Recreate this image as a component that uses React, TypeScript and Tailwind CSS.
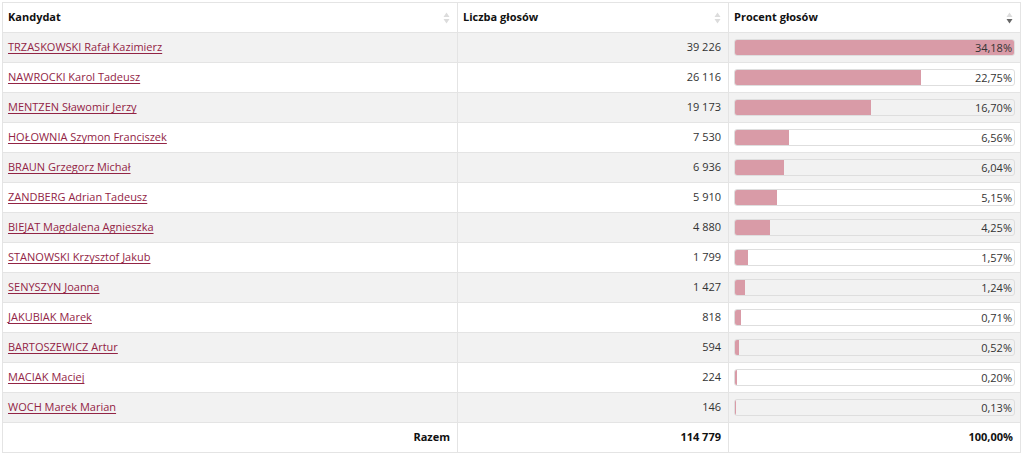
import React from "react";

type Row = { name: string; votes: string; pct: number };

const rows: Row[] = [
  { name: "TRZASKOWSKI Rafał Kazimierz", votes: "39 226", pct: 34.18 },
  { name: "NAWROCKI Karol Tadeusz", votes: "26 116", pct: 22.75 },
  { name: "MENTZEN Sławomir Jerzy", votes: "19 173", pct: 16.7 },
  { name: "HOŁOWNIA Szymon Franciszek", votes: "7 530", pct: 6.56 },
  { name: "BRAUN Grzegorz Michał", votes: "6 936", pct: 6.04 },
  { name: "ZANDBERG Adrian Tadeusz", votes: "5 910", pct: 5.15 },
  { name: "BIEJAT Magdalena Agnieszka", votes: "4 880", pct: 4.25 },
  { name: "STANOWSKI Krzysztof Jakub", votes: "1 799", pct: 1.57 },
  { name: "SENYSZYN Joanna", votes: "1 427", pct: 1.24 },
  { name: "JAKUBIAK Marek", votes: "818", pct: 0.71 },
  { name: "BARTOSZEWICZ Artur", votes: "594", pct: 0.52 },
  { name: "MACIAK Maciej", votes: "224", pct: 0.2 },
  { name: "WOCH Marek Marian", votes: "146", pct: 0.13 },
];

const maxPct = 34.18;

const fmt = (n: number) => n.toFixed(2).replace(".", ",") + "%";

// small up/down sort arrows, the active one darker
const SortIcon = ({ active }: { active?: boolean }) => (
  <svg width="7" height="12" viewBox="0 0 7 12" className="shrink-0">
    <path d="M3.5 0.5 L6.5 5 L0.5 5 Z" fill="#dcdcdc" />
    <path d="M3.5 11.5 L6.5 7 L0.5 7 Z" fill={active ? "#666666" : "#dcdcdc"} />
  </svg>
);

export default function App() {
  return (
    <div
      className="w-[1024px] h-[453px] bg-white pt-[2px] pl-[2px] text-[11px] text-[#333333]"
      style={{ fontFamily: '"Open Sans", "Liberation Sans", sans-serif' }}
    >
      <table className="w-[1018px] border-collapse border border-[#e4e4e4] table-fixed">
        <colgroup>
          <col className="w-[455px]" />
          <col className="w-[271px]" />
          <col className="w-[292px]" />
        </colgroup>
        <thead>
          <tr className="h-[30px]">
            <th className="pl-[5px] pr-[7px] text-left font-bold text-[#111111] border-r border-[#e4e4e4]">
              <div className="flex items-center justify-between">
                <span>Kandydat</span>
                <SortIcon />
              </div>
            </th>
            <th className="pl-[5px] pr-[7px] text-left font-bold text-[#111111] border-r border-[#e4e4e4]">
              <div className="flex items-center justify-between">
                <span>Liczba głosów</span>
                <SortIcon />
              </div>
            </th>
            <th className="pl-[5px] pr-[7px] text-left font-bold text-[#111111]">
              <div className="flex items-center justify-between">
                <span>Procent głosów</span>
                <SortIcon active />
              </div>
            </th>
          </tr>
        </thead>
        <tbody>
          {rows.map((r, i) => (
            <tr
              key={r.name}
              className={
                "h-[30px] border-t border-[#e4e4e4] " +
                (i % 2 === 0 ? "bg-[#f2f2f2]" : "bg-white")
              }
            >
              <td className="pl-[5px] pr-[7px] border-r border-[#e4e4e4]">
                <a href="#" className="text-[#922445] underline underline-offset-2">
                  {r.name}
                </a>
              </td>
              <td className="pl-[5px] pr-[7px] text-right border-r border-[#e4e4e4]">
                {r.votes}
              </td>
              <td className="pl-[5px] pr-[5px]">
                <div className="relative h-[17px] rounded-[3px] border border-[#dedede] overflow-hidden">
                  <div
                    className="absolute left-0 top-0 bottom-0 bg-[#d99ba7]"
                    style={{ width: `${(r.pct / maxPct) * 100}%` }}
                  />
                  <div className="relative pr-[2px] text-right leading-[15px]">
                    {fmt(r.pct)}
                  </div>
                </div>
              </td>
            </tr>
          ))}
          <tr className="h-[30px] border-t border-[#e4e4e4]">
            <td className="pl-[5px] pr-[7px] text-right font-bold text-[#111111] border-r border-[#e4e4e4]">
              Razem
            </td>
            <td className="pl-[5px] pr-[7px] text-right font-bold text-[#111111] border-r border-[#e4e4e4]">
              114 779
            </td>
            <td className="pl-[5px] pr-[7px] text-right font-bold text-[#111111]">100,00%</td>
          </tr>
        </tbody>
      </table>
    </div>
  );
}
